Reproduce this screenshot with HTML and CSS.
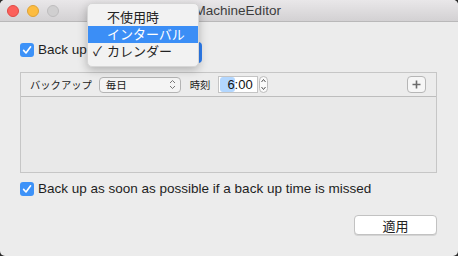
FILE: index.html
```html
<!DOCTYPE html>
<html lang="ja">
<head>
    <meta charset="UTF-8">
    <title>TimeMachineEditor</title>
    <link rel="stylesheet" href="styles.css">
</head>
<body>
    <div class="window">
        <div class="titlebar">
            <div class="lights">
                <span class="light red"></span>
                <span class="light yellow"></span>
                <span class="light gray"></span>
            </div>
            <div class="title">TimeMachineEditor</div>
        </div>

        <div class="content">
            <div class="row top-row">
                <label class="check">
                    <span class="box"><svg viewBox="0 0 14 14" width="14" height="14"><path d="M3.6 7.4 L6 10 L10.6 3.8" fill="none" stroke="#fff" stroke-width="1.6" stroke-linecap="round" stroke-linejoin="round"/></svg></span>
                    <span class="label">Back up</span>
                </label>
                <div class="popup-blue"></div>
            </div>

            <div class="group">
                <div class="group-head">
                    <span class="small-label">バックアップ</span>
                    <div class="popup-small">
                        <span>毎日</span>
                        <svg class="chev" viewBox="0 0 7 11" width="7" height="11"><path d="M1 4 L3.5 1.5 L6 4 M1 7 L3.5 9.5 L6 7" fill="none" stroke="#777" stroke-width="1"/></svg>
                    </div>
                    <span class="small-label time-label">時刻</span>
                    <div class="time-field"><span class="sel">6</span>:00</div>
                    <div class="stepper">
                        <svg viewBox="0 0 9 17" width="9" height="17"><path d="M2.5 6 L4.5 3.5 L6.5 6 M2.5 11 L4.5 13.5 L6.5 11" fill="none" stroke="#555" stroke-width="1"/></svg>
                    </div>
                    <div class="spacer"></div>
                    <div class="plus-btn">
                        <svg viewBox="0 0 17 15" width="17" height="15"><path d="M8.5 3.5 V11.5 M4.5 7.5 H12.5" stroke="#6b6b6b" stroke-width="1.6"/></svg>
                    </div>
                </div>
                <div class="group-body"></div>
            </div>

            <div class="row missed-row">
                <label class="check">
                    <span class="box"><svg viewBox="0 0 14 14" width="14" height="14"><path d="M3.6 7.4 L6 10 L10.6 3.8" fill="none" stroke="#fff" stroke-width="1.6" stroke-linecap="round" stroke-linejoin="round"/></svg></span>
                    <span class="label">Back up as soon as possible if a back up time is missed</span>
                </label>
            </div>

            <div class="row button-row">
                <button class="apply">適用</button>
            </div>
        </div>

        <div class="menu">
            <div class="menu-item">不使用時</div>
            <div class="menu-item active">インターバル</div>
            <div class="menu-item"><span class="tick">✓</span>カレンダー</div>
        </div>
    </div>
</body>
</html>
```

FILE: styles.css
```css
html {
    background: #2a2a2a;
}
body {
    margin: 0;
    font-family: "Liberation Sans", "Noto Sans CJK JP", sans-serif;
    font-size: 13.5px;
    color: #222;
}
.window {
    position: relative;
    width: 458px;
    height: 256px;
    background: #ececec;
    border-radius: 5px;
    overflow: hidden;
}
.titlebar {
    position: relative;
    height: 21px;
    background: linear-gradient(#e9e7e9, #d3d1d3);
    border-bottom: 1px solid #b9b8b9;
    display: flex;
    align-items: center;
}
.lights {
    display: flex;
    gap: 8px;
    padding-left: 7px;
}
.light {
    width: 12px;
    height: 12px;
    border-radius: 50%;
    box-sizing: border-box;
}
.red { background: #fc605b; border: 1px solid #de4a45; }
.yellow { background: #fdbc40; border: 1px solid #dea235; }
.gray { background: #d0cfd0; border: 1px solid #bdbcbd; }
.title {
    position: absolute;
    left: 0;
    right: 0;
    padding-right: 12px;
    text-align: center;
    font-size: 13.5px;
    color: #3c3c3c;
    top: 3px;
}
.content {
    padding: 20px 21px 0 20px;
}
.row {
    display: flex;
    align-items: center;
}
.check {
    display: flex;
    align-items: center;
}
.box {
    width: 14px;
    height: 14px;
    border-radius: 3px;
    background: #3d92f8;
    display: flex;
}
.label {
    margin-left: 4px;
    color: #1e1e1e;
}
.top-row {
    height: 21px;
    align-items: flex-start;
}
.top-row .check {
    height: 15px;
}
.popup-blue {
    margin-left: 6px;
    width: 109px;
    height: 21px;
    box-sizing: border-box;
    border-radius: 4px;
    background: #fff;
    border-right: 16px solid #2f7ff2;
}
.group {
    margin-top: 9px;
    border: 1px solid #c6c6c6;
    height: 99px;
}
.group-head {
    height: 23px;
    border-bottom: 1px solid #bdbdbd;
    display: flex;
    align-items: center;
    padding: 0 10px 0 9px;
    background: #ececec;
}
.small-label {
    font-size: 10.3px;
    color: #222;
}
.popup-small {
    margin-left: 7px;
    width: 82px;
    height: 16px;
    box-sizing: border-box;
    border: 1px solid #b4b4b4;
    border-radius: 4px;
    background: #f4f4f4;
    display: flex;
    align-items: center;
    justify-content: space-between;
    padding: 0 4px 0 6px;
    font-size: 10.5px;
}
.time-label {
    margin-left: 9px;
}
.time-field {
    margin-left: 8px;
    width: 40px;
    height: 17px;
    box-sizing: border-box;
    border: 1px solid #c4c4c4;
    background: #fff;
    font-size: 13px;
    display: flex;
    align-items: center;
    padding-left: 1px;
    color: #111;
}
.sel {
    background: #b3d7ff;
    padding-left: 7px;
    border-radius: 3px;
}
.stepper {
    margin-left: 1px;
    width: 9px;
    height: 17px;
    box-sizing: border-box;
    border: 1px solid #bcbcbc;
    border-radius: 5px;
    background: #fafafa;
    display: flex;
    align-items: center;
    justify-content: center;
}
.stepper svg {
    flex: none;
}
.spacer {
    flex: 1;
}
.plus-btn {
    width: 17px;
    height: 15px;
    border: 1px solid #b6b6b6;
    border-radius: 4px;
    background: #f6f6f6;
    display: flex;
}
.group-body {
    background: #e9e9e9;
    height: 75px;
}
.missed-row {
    margin-top: 8px;
}
.button-row {
    justify-content: flex-end;
    margin-top: 19px;
}
.apply {
    width: 83px;
    height: 20px;
    border: 1px solid #c2c2c2;
    border-radius: 4px;
    background: #fff;
    font-family: "Liberation Sans", "Noto Sans CJK JP", sans-serif;
    font-size: 13px;
    color: #222;
    padding: 0;
    box-shadow: 0 1px 0 #d4d4d4;
}
.menu {
    position: absolute;
    left: 87px;
    top: 3px;
    width: 112px;
    padding: 5px 0 6px;
    box-sizing: border-box;
    background: #f2f2f2;
    border: 1px solid #d6d6d6;
    border-radius: 5px;
    box-shadow: 0 3px 10px rgba(0, 0, 0, 0.25);
}
.menu-item {
    position: relative;
    height: 17px;
    line-height: 17px;
    padding-left: 19px;
    font-size: 13px;
    color: #222;
}
.menu-item.active {
    background: #3b8ef6;
    color: #fff;
}
.tick {
    position: absolute;
    left: 5px;
    font-size: 13px;
}
```
